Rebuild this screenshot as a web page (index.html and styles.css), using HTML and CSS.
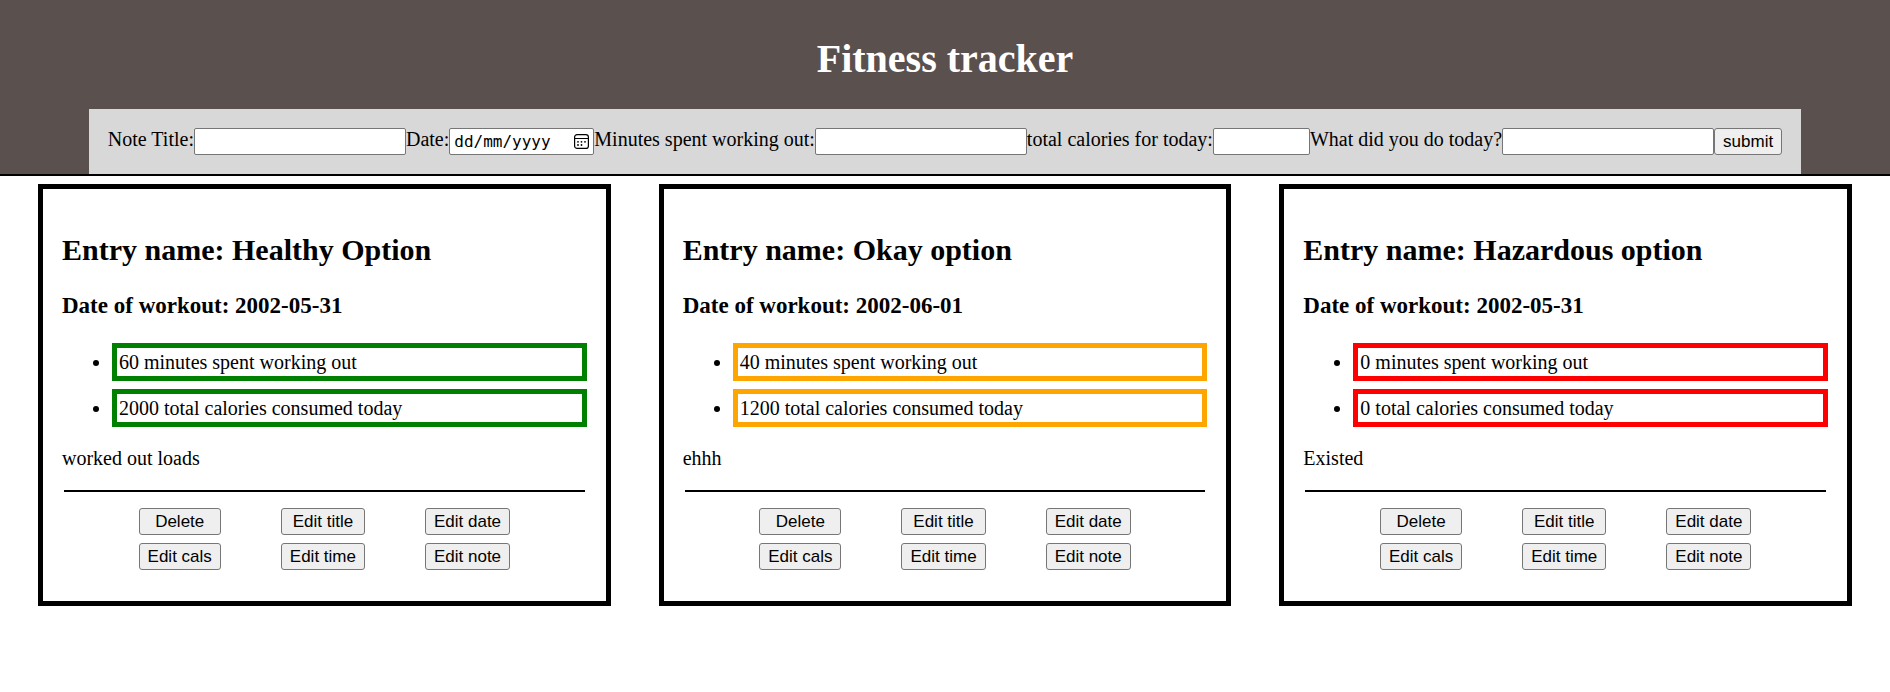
FILE: index.html
```html
<!DOCTYPE html>
<html lang="en-GB">
<head>
  <meta charset="UTF-8">
  <meta name="viewport" content="width=device-width, initial-scale=1.0">
  <title>Fitness tracker</title>
  <link rel="stylesheet" href="styles.css">
</head>
<body>

<header class="header">
  <h1>Fitness tracker</h1>
  <form class="entry-form">
    <label for="title">Note Title:</label>
    <input type="text" id="title">
    <label for="date">Date:</label>
    <div class="date-field">
      <input type="text" id="date" class="date-input" placeholder="dd/mm/yyyy">
      <button type="button" class="date-button" aria-label="Show date picker">
        <svg width="15" height="15" viewBox="0 0 15 15">
          <rect x="0.6" y="0.6" width="13.8" height="13.8" rx="2.5" fill="none" stroke="#000" stroke-width="1.2"/>
          <path d="M1 4.500h13" stroke="#000" stroke-width="1"/>
          <circle cx="4" cy="7.8" r="0.9"/>
          <circle cx="7.500" cy="7.8" r="0.9"/>
          <circle cx="11" cy="7.8" r="0.9"/>
          <circle cx="4" cy="11" r="0.9"/>
          <circle cx="7.500" cy="11" r="0.9"/>
        </svg>
      </button>
    </div>
    <label for="minutes">Minutes spent working out:</label>
    <input type="number" id="minutes">
    <label for="calories">total calories for today:</label>
    <input type="number" id="calories" class="short-input">
    <label for="note">What did you do today?</label>
    <input type="text" id="note">
    <button type="submit">submit</button>
  </form>
</header>

<main class="entries">
  <section class="entry">
    <h2>Entry name: Healthy Option</h2>
    <h3>Date of workout: 2002-05-31</h3>
    <ul>
      <li class="healthy">60 minutes spent working out</li>
      <li class="healthy">2000 total calories consumed today</li>
    </ul>
    <p>worked out loads</p>
    <div class="buttons">
      <button type="button">Delete</button>
      <button type="button">Edit title</button>
      <button type="button">Edit date</button>
      <button type="button">Edit cals</button>
      <button type="button">Edit time</button>
      <button type="button">Edit note</button>
    </div>
  </section>

  <section class="entry">
    <h2>Entry name: Okay option</h2>
    <h3>Date of workout: 2002-06-01</h3>
    <ul>
      <li class="okay">40 minutes spent working out</li>
      <li class="okay">1200 total calories consumed today</li>
    </ul>
    <p>ehhh</p>
    <div class="buttons">
      <button type="button">Delete</button>
      <button type="button">Edit title</button>
      <button type="button">Edit date</button>
      <button type="button">Edit cals</button>
      <button type="button">Edit time</button>
      <button type="button">Edit note</button>
    </div>
  </section>

  <section class="entry">
    <h2>Entry name: Hazardous option</h2>
    <h3>Date of workout: 2002-05-31</h3>
    <ul>
      <li class="hazardous">0 minutes spent working out</li>
      <li class="hazardous">0 total calories consumed today</li>
    </ul>
    <p>Existed</p>
    <div class="buttons">
      <button type="button">Delete</button>
      <button type="button">Edit title</button>
      <button type="button">Edit date</button>
      <button type="button">Edit cals</button>
      <button type="button">Edit time</button>
      <button type="button">Edit note</button>
    </div>
  </section>
</main>

</body>
</html>
```

FILE: styles.css
```css
* {
  box-sizing: border-box;
}
body {
  margin: 0;
  font-family: "Liberation Serif", "Times New Roman", serif;
  font-size: 20px;
  line-height: 23px;
  background-color: #fff;
  color: #000;
}
.header {
  display: flex;
  flex-direction: column;
  align-items: center;
  background-color: #5a504e;
  border-bottom: 2px solid #000;
}
h1 {
  margin: 36px 0 27px;
  font-size: 40px;
  line-height: 46px;
  color: #fff;
}
.entry-form {
  display: flex;
  padding: 19px;
  background-color: #d8d8d8;
}
input {
  width: 212px;
  height: 27px;
  padding: 1px 3px;
  border: 1px solid #767676;
  border-radius: 2px;
  background-color: #fff;
  font-family: "Liberation Sans", Arial, sans-serif;
  font-size: 17px;
}
.date-field {
  display: flex;
  position: relative;
}
.date-input {
  width: 145px;
  padding: 1px 24px 1px 4px;
  font-family: "DejaVu Sans Mono", monospace;
  font-size: 16px;
}
.date-input::placeholder {
  color: #000;
}
.short-input {
  width: 97px;
}
button {
  height: 27px;
  padding: 1px 8px;
  border: 1px solid #767676;
  border-radius: 3px;
  background-color: #efefef;
  color: #000;
  font-family: "Liberation Sans", Arial, sans-serif;
  font-size: 17px;
  line-height: 19px;
}
.date-button {
  display: flex;
  position: absolute;
  top: 6px;
  right: 5px;
  height: 15px;
  padding: 0;
  border: none;
  background: none;
}
.entries {
  display: grid;
  grid-template-columns: repeat(3, 1fr);
  gap: 48px;
  padding: 8px 38px;
}
.entry {
  padding: 19px 19px 31px;
  border: 5px solid #000;
}
h2 {
  margin: 25px 0;
  font-size: 30px;
  line-height: 34px;
}
h3 {
  margin: 25px 0 24px;
  font-size: 23px;
  line-height: 27px;
}
ul {
  display: grid;
  gap: 8px;
  margin: 0;
  padding-left: 50px;
}
li {
  padding: 3px 2px 2px;
  border: 5px solid;
}
li::marker {
  color: #000;
}
.healthy {
  border-color: green;
}
.okay {
  border-color: orange;
}
.hazardous {
  border-color: red;
}
p {
  margin: 20px 0;
}
.buttons {
  display: grid;
  grid-template-columns: repeat(3, auto);
  justify-content: center;
  gap: 8px 60px;
  margin: 0 2px;
  padding-top: 16px;
  border-top: 2px solid #000;
}
```
